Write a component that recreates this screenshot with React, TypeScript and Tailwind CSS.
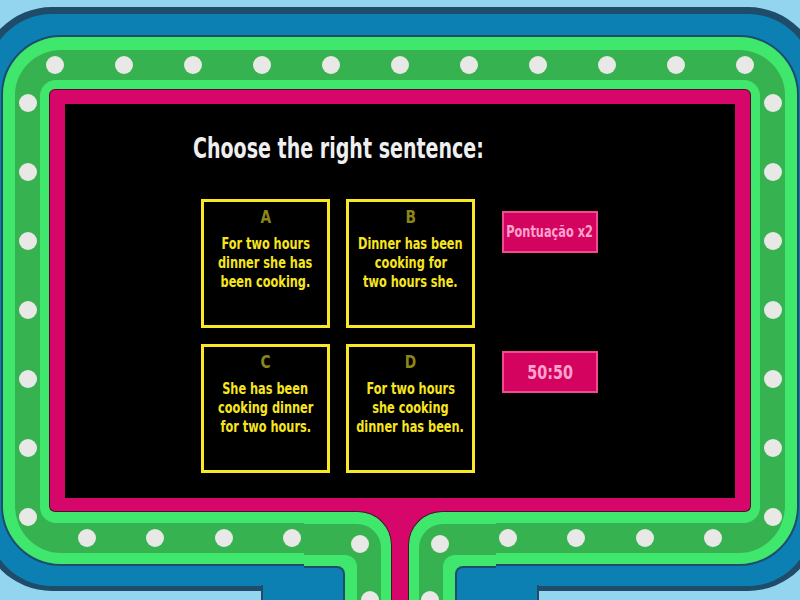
import clsx from 'clsx';

// Quiz screen: game-show frame with four answer cards and two power-up buttons.

const cards = [
  { letter: 'A', lines: ['For two hours', 'dinner she has', 'been cooking.'] },
  { letter: 'B', lines: ['Dinner has been', 'cooking for', 'two hours she.'] },
  { letter: 'C', lines: ['She has been', 'cooking dinner', 'for two hours.'] },
  { letter: 'D', lines: ['For two hours', 'she cooking', 'dinner has been.'] },
];

// condensed bold face, squeezed a bit more with scale-x where it is used
const narrow = "font-['DejaVu_Sans_Condensed','Liberation_Sans',sans-serif] font-bold";

function Dot({ className }: { className?: string }) {
  return <span className={clsx('block w-[18px] h-[18px] shrink-0 rounded-full bg-[#e8e8e6]', className)} />;
}

function Dots({ n, className }: { n: number; className: string }) {
  return (
    <div className={className}>
      {Array.from({ length: n }).map((_, i) => (
        <Dot key={i} />
      ))}
    </div>
  );
}

// Green pillar that drops from the frame's bottom edge beside the pink stem.
function Leg({ side }: { side: 'left' | 'right' }) {
  const left = side === 'left';
  return (
    <div
      className={clsx(
        'w-[88px] h-full bg-[#3fe86c] border-t border-[#4a0f2c] pt-[12px]',
        left ? 'rounded-tr-[34px] border-r pr-[10px]' : 'rounded-tl-[34px] border-l pl-[10px]'
      )}
    >
      <div
        className={clsx(
          'relative h-full bg-[#37b250] pt-[31px]',
          left ? 'rounded-tr-[24px] pr-[24px]' : 'rounded-tl-[24px] pl-[24px]'
        )}
      >
        <Dot className={clsx('absolute top-[11px]', left ? 'left-[47px]' : 'left-[12px]')} />
        <Dot className={clsx('absolute top-[67px]', left ? 'left-[57px]' : 'left-[2px]')} />
        <div
          className={clsx(
            'h-full bg-[#3fe86c] pt-[11px]',
            left ? 'rounded-tr-[12px] pr-[12px]' : 'rounded-tl-[12px] pl-[12px]'
          )}
        >
          <div
            className={clsx(
              'h-full bg-[#1f4d69] pt-[2px]',
              left ? 'rounded-tr-[8px] pr-[2px]' : 'rounded-tl-[8px] pl-[2px]'
            )}
          >
            <div className={clsx('h-full bg-[#0c80b2]', left ? 'rounded-tr-[6px]' : 'rounded-tl-[6px]')} />
          </div>
        </div>
      </div>
    </div>
  );
}

function Card({ letter, lines }: { letter: string; lines: string[] }) {
  return (
    <div className="h-[129px] border-[3px] border-[#f9e826] flex flex-col items-center pt-[5px]">
      <span className={clsx(narrow, 'text-[17px] leading-[20px] text-[#8c8616] scale-x-[0.9]')}>{letter}</span>
      <div className={clsx(narrow, 'mt-[8px] flex flex-col items-center text-[15px] leading-[19px] text-[#f7e61f]')}>
        {lines.map((l) => (
          <span key={l} className="whitespace-nowrap scale-x-[0.84]">
            {l}
          </span>
        ))}
      </div>
    </div>
  );
}

function PowerUp({ label, size }: { label: string; size: string }) {
  return (
    <button
      className={clsx(
        narrow,
        size,
        'h-[42px] flex items-center justify-center border-2 border-[#f04a90] bg-[#d3035f] text-[#ffa3cd]'
      )}
    >
      <span className="whitespace-nowrap scale-x-[0.84]">{label}</span>
    </button>
  );
}

export default function App() {
  return (
    <div className="relative w-[800px] h-[600px] overflow-hidden bg-[#93d4ee]">
      {/* blue outer band */}
      <div className="mt-[7px] -mx-[20px] h-[584px] rounded-[72px] border-[7px] border-b-[5px] border-[#1f4d69] bg-[#0c80b2] pt-[21px] pb-[20px] px-[14px]">
        <div className="h-full rounded-[60px] border-2 border-[#1f4d69]">
          {/* dotted green band */}
          <div className="h-full rounded-[58px] border-t-[13px] border-x-[12px] border-b-[11px] border-[#3fe86c] bg-[#37b250] grid grid-cols-[25px_1fr_25px] grid-rows-[30px_1fr_30px]">
            <Dots
              n={7}
              className="col-start-1 row-start-1 row-span-3 pt-[44px] pb-[27px] flex flex-col justify-between items-center"
            />
            <Dots n={11} className="col-start-2 row-start-1 px-[6px] flex justify-between items-center" />
            <Dots
              n={7}
              className="col-start-3 row-start-1 row-span-3 pt-[44px] pb-[27px] flex flex-col justify-between items-center"
            />

            <div className="col-start-2 row-start-2 rounded-[16px] border-t-[10px] border-x-[10px] border-b-[12px] border-[#3fe86c]">
              {/* pink screen bezel */}
              <div className="h-full rounded-[5px] border-t-[14px] border-x-[15px] border-b-[13px] border-[#d6066b] bg-black shadow-[0_0_0_1px_#4a0f2c] pl-[128px] pt-[29px]">
                <h1 className={clsx(narrow, 'origin-left scale-x-[0.756] text-[28px] leading-[32px] text-[#efefef]')}>
                  Choose the right sentence:
                </h1>
                <div className="mt-[34px] ml-[8px] flex">
                  <div className="grid grid-cols-[129px_129px] gap-[16px]">
                    {cards.map((c) => (
                      <Card key={c.letter} letter={c.letter} lines={c.lines} />
                    ))}
                  </div>
                  <div className="ml-[27px] w-[96px] pt-[12px] flex flex-col gap-[98px]">
                    <PowerUp label="Pontuação x2" size="text-[15px]" />
                    <PowerUp label="50:50" size="text-[19px]" />
                  </div>
                </div>
              </div>
            </div>

            <div className="col-start-2 row-start-3 px-[38px] flex justify-between items-center">
              <Dots n={4} className="w-[223px] flex justify-between" />
              <Dots n={4} className="w-[223px] flex justify-between" />
            </div>
          </div>
        </div>
      </div>

      {/* blue band carried down beside the pillars */}
      <div className="absolute left-[261px] top-[585px] w-[50px] h-[20px] bg-[#0c80b2] border-l-2 border-[#1f4d69]" />
      <div className="absolute left-[489px] top-[585px] w-[50px] h-[20px] bg-[#0c80b2] border-r-2 border-[#1f4d69]" />

      {/* pink stem with a green pillar each side */}
      <div className="absolute left-[304px] top-[499px] w-[192px] h-[101px] bg-[#d6066b] pt-[12px] flex justify-between">
        <Leg side="left" />
        <Leg side="right" />
      </div>
    </div>
  );
}
